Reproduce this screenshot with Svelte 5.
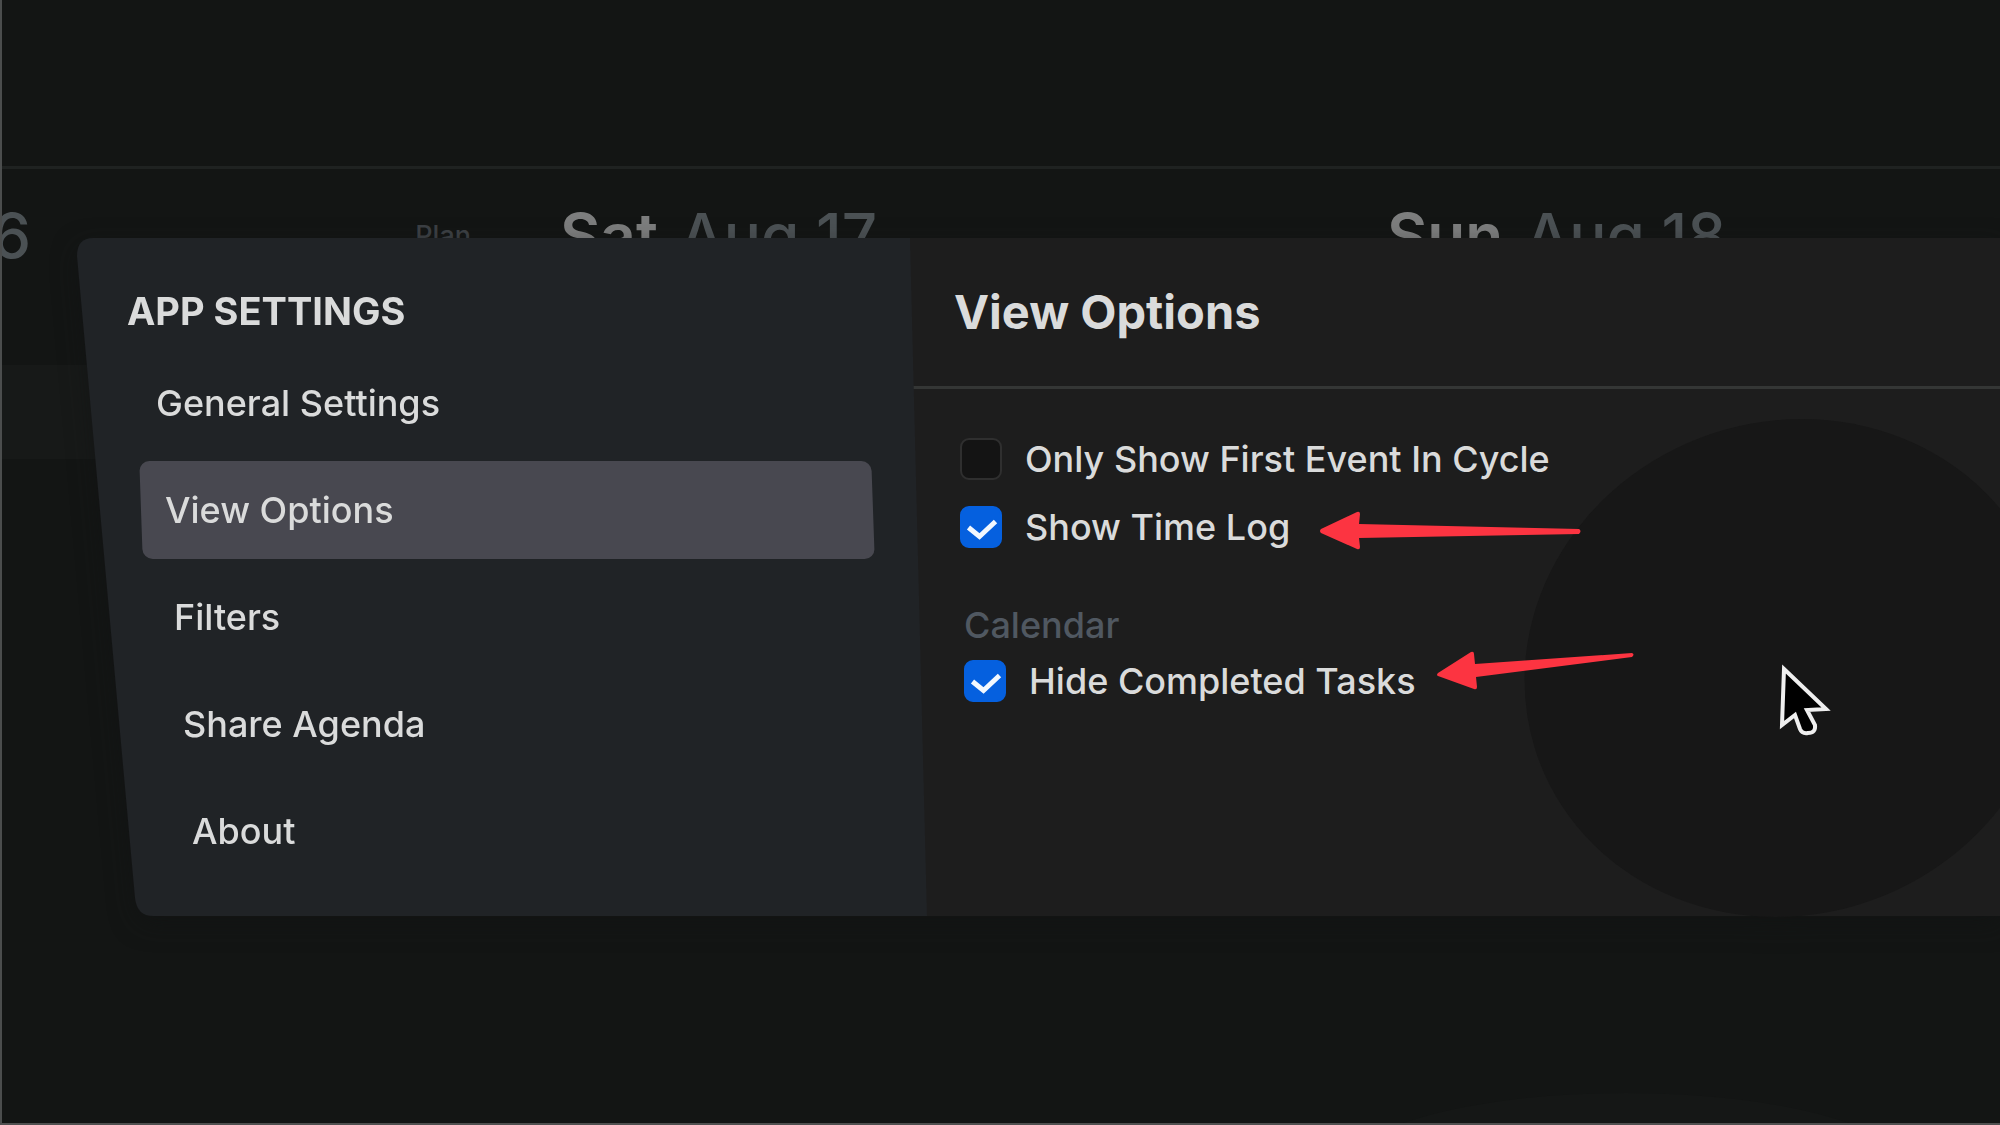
<script>
  const sections = ['General Settings', 'View Options', 'Filters', 'Share Agenda', 'About'];
  let active = $state('View Options');
  let firstOnly = $state(false);
  let timeLog = $state(true);
  let hideCompleted = $state(true);
</script>

{#snippet tick()}
  <svg class="tick" viewBox="0 0 42 42" aria-hidden="true">
    <path d="M8.500 21.500 L19.500 30.500 L35.500 15.500" />
  </svg>
{/snippet}

<div class="page">
  <div class="toolbar"></div>
  <header class="days">
    <div class="day first"><span class="date">6</span><span class="plan">Plan</span></div>
    <div class="day"><strong>Sat</strong><span class="date">Aug 17</span></div>
    <div class="day"><strong>Sun</strong><span class="date">Aug 18</span></div>
  </header>
  <div class="slot"></div>
  <div class="glow"></div>

  <div class="dialog" role="dialog" aria-label="App settings">
    <aside>
      <svg class="plate" viewBox="0 0 850 678" preserveAspectRatio="none" aria-hidden="true">
        <path d="M16 0 H833 L850 678 H76 Q60 678 58 660 L0 18 Q0 0 16 0 Z" />
      </svg>
      <h2>APP SETTINGS</h2>
      <nav>
        {#each sections as name, i}
          <button
            class:active={active === name}
            style:--level={i}
            onclick={() => (active = name)}>{name}</button>
        {/each}
      </nav>
    </aside>

    <main>
      <svg class="spot" viewBox="0 0 530 500" aria-hidden="true">
        <ellipse cx="265" cy="250" rx="264" ry="249" transform="translate(15 0) skewX(-3)" />
      </svg>
      <div class="head"><h1>View Options</h1></div>
      <div class="options">
        <label>
          <span class="box"><input type="checkbox" bind:checked={firstOnly} />{@render tick()}</span>
          Only Show First Event In Cycle
        </label>
        <label>
          <span class="box"><input type="checkbox" bind:checked={timeLog} />{@render tick()}</span>
          Show Time Log
          <svg class="arrow" viewBox="0 0 264 42" aria-hidden="true">
            <path d="M3 21 L39 4 Q42 3 42 6 L41 16 L261 21 Q264 23 261 26 L41 30 L42 39 Q42 42 39 41 L3 25 Q1 23 3 21 Z" />
          </svg>
        </label>
      </div>
      <div class="options calendar">
        <h3>Calendar</h3>
        <label>
          <span class="box"><input type="checkbox" bind:checked={hideCompleted} />{@render tick()}</span>
          Hide Completed Tasks
          <svg class="arrow low" viewBox="0 0 200 42" aria-hidden="true">
            <path d="M2 23 L35 2 Q38 1 38 4 L39 14 L196 3 Q199 4 196 7 L40 27 L41 37 Q41 40 38 39 L2 26 Q0 25 2 23 Z" />
          </svg>
        </label>
      </div>
      <svg class="cursor" viewBox="0 0 52 74" aria-hidden="true">
        <path d="M5 5 L47 45 L28 46 L36 61 Q37 69 29 69 Q23 70 21 65 L16 51 L3 61 Z" />
      </svg>
    </main>
  </div>
</div>

<style>
  :global(body) {
    background: #131514;
  }
  .page {
    position: relative;
    box-sizing: border-box;
    min-height: 100vh;
    overflow: hidden;
    border-left: 2px solid #4b4d4d;
    border-bottom: 2px solid #505050;
    background: #131514;
    color: #dadbdb;
    font-family: Inter, "Liberation Sans", sans-serif;
    font-size: 36px;
    line-height: 42px;
  }
  .toolbar {
    height: 166px;
    border-bottom: 3px solid #1f2221;
  }
  .days {
    display: grid;
    grid-template-columns: 558px 827px 1fr;
    height: 134px;
    align-items: center;
    font-size: 62px;
    line-height: 64px;
  }
  .day {
    display: flex;
    gap: 22px;
    align-items: center;
  }
  .first {
    justify-content: space-between;
    padding-right: 89px;
  }
  .first .date {
    margin-left: -10px;
  }
  .date {
    color: #4b5154;
    font-weight: 500;
  }
  .plan {
    color: #3c4044;
    font-size: 27px;
    font-weight: 500;
  }
  strong {
    color: #7d7e7e;
    font-weight: 600;
  }
  .slot {
    width: 120px;
    height: 94px;
    margin-top: 62px;
    background: #171918;
  }
  .glow {
    position: absolute;
    bottom: -130px;
    left: 67%;
    width: 570px;
    height: 160px;
    border-radius: 50%;
    background: #151716;
  }
  .dialog {
    position: absolute;
    top: 238px;
    left: 75px;
    right: 0;
    display: grid;
    grid-template-columns: 833fr 1090fr;
    min-height: 678px;
    filter: drop-shadow(0 8px 12px #10121180);
  }
  aside {
    position: relative;
    z-index: 1;
    box-sizing: border-box;
    padding: 52px 37px 32px 50px;
  }
  .plate {
    position: absolute;
    top: 0;
    left: 0;
    width: calc(100% + 17px);
    height: 100%;
    z-index: -1;
    fill: #202326;
  }
  h1, h2, h3 {
    margin: 0;
  }
  h2 {
    font-size: 38px;
    font-weight: 700;
  }
  nav {
    display: flex;
    flex-direction: column;
    gap: 9px;
    padding: 22px 0 0 5px;
  }
  button {
    position: relative;
    z-index: 0;
    height: 98px;
    margin-left: calc(var(--level) * 9px);
    padding: 0 24px;
    border: 0;
    background: none;
    color: inherit;
    font: inherit;
    font-weight: 500;
    text-align: left;
  }
  .active::before {
    content: "";
    position: absolute;
    inset: 0;
    z-index: -1;
    border-radius: 10px;
    background: #484850;
    transform: skewX(2deg);
  }
  main {
    position: relative;
    background: #1d1d1d;
  }
  .head {
    display: flex;
    align-items: center;
    height: 148px;
    padding-left: 44px;
    border-bottom: 3px solid #343635;
  }
  h1 {
    font-size: 47px;
    font-weight: 700;
    line-height: 56px;
  }
  .options {
    position: relative;
    display: flex;
    flex-direction: column;
    align-items: flex-start;
    gap: 26px;
    padding: 49px 0 0 50px;
  }
  .calendar {
    gap: 14px;
    padding: 56px 0 0 54px;
  }
  h3 {
    color: #505861;
    font-size: 36px;
    font-weight: 500;
  }
  label {
    position: relative;
    display: flex;
    align-items: center;
    gap: 23px;
    font-weight: 500;
    white-space: nowrap;
  }
  .box {
    display: grid;
    width: 42px;
    height: 42px;
  }
  input, .tick {
    grid-area: 1 / 1;
    box-sizing: border-box;
    width: 42px;
    height: 42px;
    margin: 0;
  }
  input {
    appearance: none;
    border: 2px solid #2f2f2f;
    border-radius: 9px;
    background: #141414;
  }
  input:checked {
    border-color: #0560df;
    background: #0560df;
  }
  .tick {
    fill: none;
    stroke: #f2f8ff;
    stroke-width: 5;
    visibility: hidden;
    pointer-events: none;
  }
  input:checked + .tick {
    visibility: visible;
  }
  .arrow {
    position: absolute;
    top: 2px;
    left: calc(100% + 28px);
    width: 264px;
    height: 42px;
    fill: #fc3441;
  }
  .low {
    top: -10px;
    left: calc(100% + 20px);
    width: 200px;
  }
  .spot {
    position: absolute;
    top: 180px;
    left: 612px;
    width: 530px;
    height: 500px;
    fill: #171717;
  }
  .cursor {
    position: absolute;
    top: 426px;
    left: 869px;
    width: 52px;
    height: 74px;
    fill: #000;
    stroke: #efefef;
    stroke-width: 4;
  }
</style>
